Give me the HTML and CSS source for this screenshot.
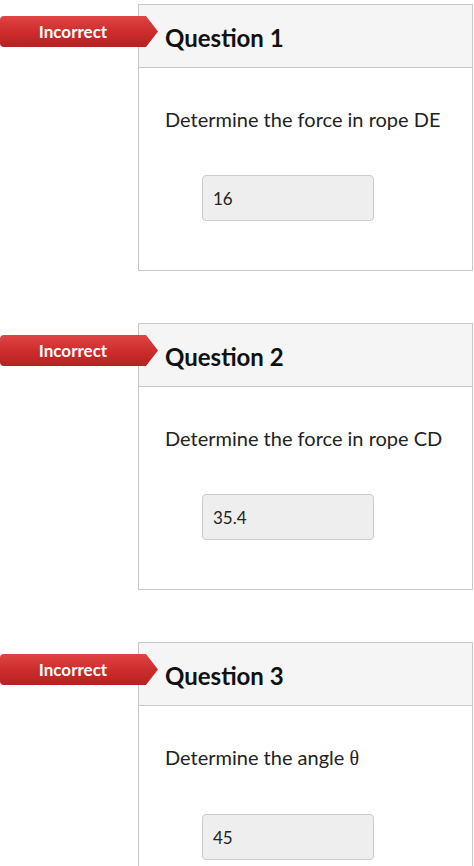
FILE: index.html
```html
<!DOCTYPE html>
<html lang="en">
<head>
  <meta charset="UTF-8" />
  <meta name="viewport" content="width=device-width, initial-scale=1.0"/>
  <title>Quiz Results</title>
  <link rel="stylesheet" href="styles.css">
</head>
<body>

  <!-- QUESTION 1 -->
  <div class="question">
    <div class="badge">Incorrect</div>
    <div class="card">
      <div class="card-header">
        <h2>Question 1</h2>
      </div>
      <div class="card-body">
        <p>Determine the force in rope DE</p>
        <div class="answer">16</div>
      </div>
    </div>
  </div>

  <!-- QUESTION 2 -->
  <div class="question">
    <div class="badge">Incorrect</div>
    <div class="card">
      <div class="card-header">
        <h2>Question 2</h2>
      </div>
      <div class="card-body">
        <p>Determine the force in rope CD</p>
        <div class="answer">35.4</div>
      </div>
    </div>
  </div>

  <!-- QUESTION 3 -->
  <div class="question">
    <div class="badge">Incorrect</div>
    <div class="card">
      <div class="card-header">
        <h2>Question 3</h2>
      </div>
      <div class="card-body">
        <p>Determine the angle <span class="symbol">&theta;</span></p>
        <div class="answer">45</div>
      </div>
    </div>
  </div>

</body>
</html>
```

FILE: styles.css
```css
body {
  font-family: Lato, 'Noto Sans', sans-serif;
  background-color: #ffffff;
  margin: 0;
  padding-top: 4px;
  color: #2d2d2d;
}

.question {
  position: relative;
  margin: 0 1px 52px 138px;
}

.card {
  height: 267px;
  box-sizing: border-box;
  border: 1px solid #c7c7c7;
  background-color: #ffffff;
}

.card-header {
  background-color: #f5f5f5;
  border-bottom: 1px solid #c7c7c7;
  padding: 18px 26px 15px;
}

.card-header h2 {
  margin: 0;
  font-size: 24px;
  line-height: 29px;
  font-weight: 700;
  color: #111111;
}

.card-body {
  padding: 39px 26px 0;
}

.card-body p {
  margin: 0 0 44px;
  font-size: 20px;
  line-height: 24px;
  color: #222222;
}

.symbol {
  font-family: 'Liberation Serif', serif;
}

.answer {
  display: flex;
  align-items: center;
  box-sizing: border-box;
  width: 172px;
  height: 46px;
  margin-left: 37px;
  padding-left: 10px;
  background-color: #eeeeee;
  border: 1px solid #cccccc;
  border-radius: 4px;
  font-size: 17px;
  color: #222222;
}

/* badge sits over the card's left edge */
.badge {
  position: absolute;
  left: -138px;
  top: 12px;
  z-index: 1;
  box-sizing: border-box;
  width: 158px;
  height: 31px;
  padding-right: 12px;
  text-align: center;
  font-size: 17px;
  font-weight: 700;
  line-height: 31px;
  color: #ffffff;
  background: linear-gradient(#e04444, #cc2b2b 55%, #b52222);
  border-radius: 4px 0 0 4px;
  clip-path: polygon(0 0, 146px 0, 158px 50%, 146px 100%, 0 100%);
}
```
